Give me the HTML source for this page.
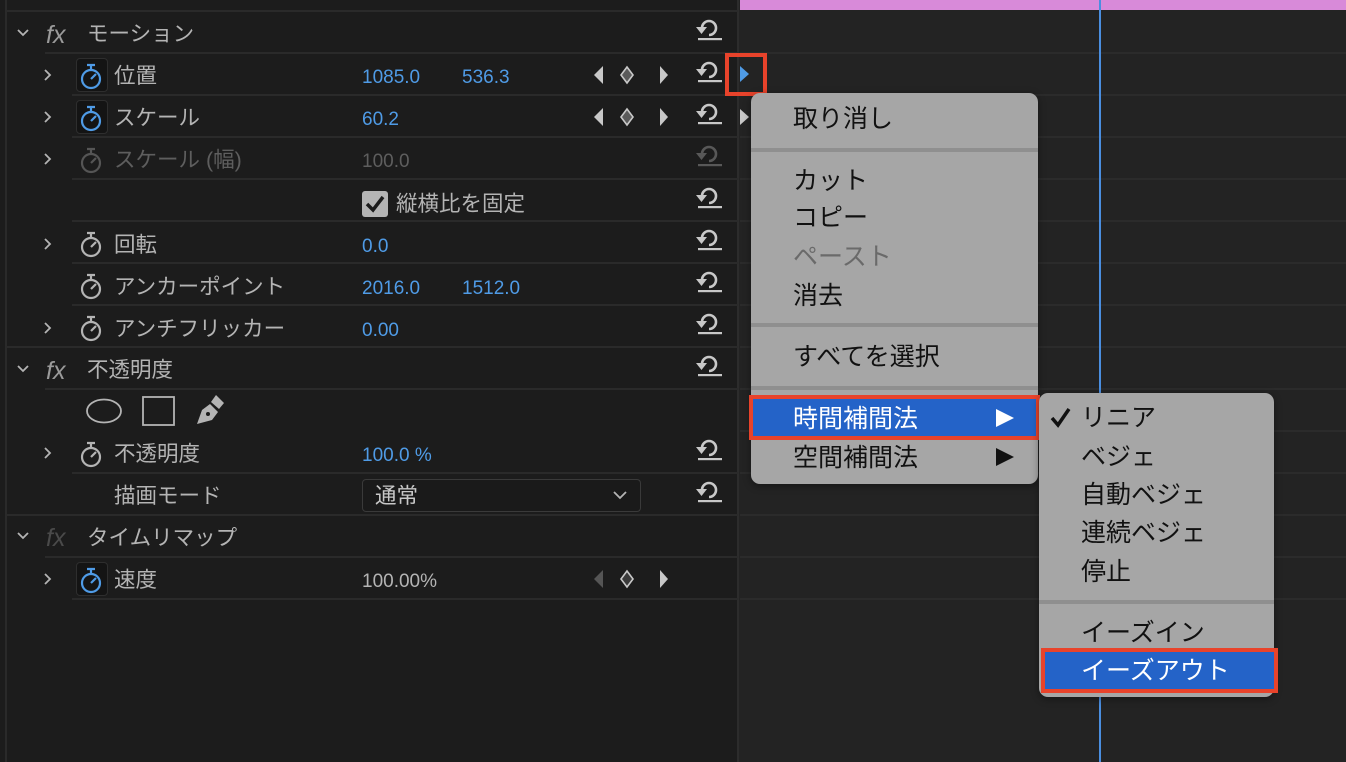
<!DOCTYPE html>
<html><head><meta charset="utf-8">
<style>
*{margin:0;padding:0;box-sizing:border-box}
body{width:1346px;height:762px;overflow:hidden;background:#1c1c1c;font-family:"Liberation Sans","Noto Sans CJK JP",sans-serif;position:relative}
.a{position:absolute}
.t{position:absolute;font-size:21.5px;color:#b4b4b4;line-height:1;white-space:nowrap;transform:translateY(2px)}
.v{position:absolute;font-size:19px;color:#4f9be6;line-height:1;white-space:nowrap;transform:translateY(2px)}
.ln{position:absolute;height:2px;background:#2a2a2a}
.rl{position:absolute;left:740px;width:606px;height:2px;background:#2b2b2b}
.mi{position:absolute;font-size:25px;color:#111;line-height:1;white-space:nowrap;transform:translateY(2px)}
.sep{position:absolute;height:4px;background:#8f8f8f}
svg{position:absolute;overflow:visible}
.fx{position:absolute;font-family:'Liberation Sans',sans-serif;font-style:italic;font-size:25px;color:#9a9a9a;line-height:1;transform:translateY(2px)}
</style></head><body>
<svg width="0" height="0" style="position:absolute">
<defs>
<g id="rst"><path d="M6 12 A7 7 0 1 1 13 19" fill="none" stroke="#c8c8c8" stroke-width="2.6"/><path d="M0 11 L11 11 L5.5 18 Z" fill="#c8c8c8"/><rect x="2" y="22" width="24" height="2.2" fill="#c8c8c8"/></g>
<g id="sw"><circle cx="0" cy="0" r="9" fill="none" stroke-width="2.2"/><path d="M0 -9 V-14 M-4 -14 H4 M0 0 L5 -5" fill="none" stroke-width="2.2"/></g>
<g id="kf"><path d="M0 -9 L-9 0 L0 9 Z" fill="#c8c8c8"/><path d="M24 -8 L30 0 L24 8 L18 0 Z" fill="#5a5a5a" stroke="#c8c8c8" stroke-width="1.6"/><path d="M57 -9 L65 0 L57 9 Z" fill="#c8c8c8"/></g>
<path id="chr" d="M0 0 L5 5 L0 10" fill="none" stroke="#b4b4b4" stroke-width="1.8"/>
<path id="chd" d="M0 0 L5 5 L10 0" fill="none" stroke="#b4b4b4" stroke-width="1.8"/>
</defs></svg>

<div class="a" style="left:738px;top:0;width:608px;height:762px;background:#232323"></div>
<div class="a" style="left:737px;top:0;width:2px;height:762px;background:#2c2c2c"></div>
<div class="a" style="left:740px;top:0;width:606px;height:10px;background:#d88ad9"></div>
<div class="rl" style="top:52px"></div><div class="rl" style="top:94px"></div><div class="rl" style="top:136px"></div>
<div class="rl" style="top:178px"></div><div class="rl" style="top:220px"></div><div class="rl" style="top:262px"></div>
<div class="rl" style="top:304px"></div><div class="rl" style="top:346px"></div><div class="rl" style="top:388px"></div>
<div class="rl" style="top:430px"></div><div class="rl" style="top:472px"></div><div class="rl" style="top:514px"></div>
<div class="rl" style="top:556px"></div><div class="rl" style="top:598px"></div>
<div class="a" style="left:1099px;top:0;width:2px;height:762px;background:#4a8ee0"></div>

<div class="a" style="left:5px;top:0;width:2px;height:762px;background:#2a2a2a"></div>
<div class="ln" style="left:5px;top:10px;width:733px"></div>
<div class="ln" style="left:45px;top:52px;width:693px"></div>
<div class="ln" style="left:72px;top:94px;width:666px"></div>
<div class="ln" style="left:72px;top:136px;width:666px"></div>
<div class="ln" style="left:72px;top:178px;width:666px"></div>
<div class="ln" style="left:72px;top:220px;width:666px"></div>
<div class="ln" style="left:72px;top:262px;width:666px"></div>
<div class="ln" style="left:72px;top:304px;width:666px"></div>
<div class="ln" style="left:5px;top:346px;width:733px"></div>
<div class="ln" style="left:45px;top:388px;width:693px"></div>
<div class="ln" style="left:72px;top:472px;width:666px"></div>
<div class="ln" style="left:5px;top:514px;width:733px"></div>
<div class="ln" style="left:45px;top:556px;width:693px"></div>
<div class="ln" style="left:72px;top:598px;width:666px"></div>

<svg style="left:18px;top:30px"><use href="#chd"/></svg>
<div class="fx" style="left:46px;top:21px">fx</div>
<div class="t" style="left:87px;top:22px">モーション</div>
<svg style="left:696px;top:16px"><use href="#rst"/></svg>

<svg style="left:45px;top:70px"><use href="#chr"/></svg>
<div class="a" style="left:76px;top:58px;width:32px;height:34px;background:#141414;border:1px solid #2e2e2e;border-radius:4px"></div>
<svg style="left:91px;top:79px" stroke="#4f9be6"><use href="#sw"/></svg>
<div class="t" style="left:114px;top:64px">位置</div>
<div class="v" style="left:362px;top:66px">1085.0</div>
<div class="v" style="left:462px;top:66px">536.3</div>
<svg style="left:603px;top:75px"><use href="#kf"/></svg>
<svg style="left:696px;top:58px"><use href="#rst"/></svg>
<svg style="left:740px;top:66px"><path d="M0 0 L9 8 L0 16 Z" fill="#4f9be6"/></svg>
<div class="a" style="left:725px;top:53px;width:42px;height:43px;border:4px solid #e8432b"></div>

<svg style="left:45px;top:112px"><use href="#chr"/></svg>
<div class="a" style="left:76px;top:100px;width:32px;height:34px;background:#141414;border:1px solid #2e2e2e;border-radius:4px"></div>
<svg style="left:91px;top:121px" stroke="#4f9be6"><use href="#sw"/></svg>
<div class="t" style="left:114px;top:106px">スケール</div>
<div class="v" style="left:362px;top:108px">60.2</div>
<svg style="left:603px;top:117px"><use href="#kf"/></svg>
<svg style="left:696px;top:100px"><use href="#rst"/></svg>
<svg style="left:740px;top:109px"><path d="M0 0 L9 8 L0 16 Z" fill="#c8c8c8"/></svg>

<svg style="left:45px;top:154px"><use href="#chr"/></svg>
<svg style="left:91px;top:163px" stroke="#555"><use href="#sw"/></svg>
<div class="t" style="left:114px;top:148px;color:#5e5e5e">スケール (幅)</div>
<div class="v" style="left:362px;top:150px;color:#5e5e5e">100.0</div>
<svg style="left:696px;top:142px;opacity:.35"><use href="#rst"/></svg>

<div class="a" style="left:362px;top:191px;width:26px;height:26px;background:#b4b4b4;border-radius:3px"></div>
<svg style="left:362px;top:191px"><path d="M5 13 L11 19 L21 6" fill="none" stroke="#1c1c1c" stroke-width="3.5"/></svg>
<div class="t" style="left:396px;top:192px">縦横比を固定</div>
<svg style="left:696px;top:184px"><use href="#rst"/></svg>

<svg style="left:45px;top:239px"><use href="#chr"/></svg>
<svg style="left:91px;top:247px" stroke="#b4b4b4"><use href="#sw"/></svg>
<div class="t" style="left:114px;top:233px">回転</div>
<div class="v" style="left:362px;top:235px">0.0</div>
<svg style="left:696px;top:226px"><use href="#rst"/></svg>

<svg style="left:91px;top:289px" stroke="#b4b4b4"><use href="#sw"/></svg>
<div class="t" style="left:114px;top:275px">アンカーポイント</div>
<div class="v" style="left:362px;top:277px">2016.0</div>
<div class="v" style="left:462px;top:277px">1512.0</div>
<svg style="left:696px;top:268px"><use href="#rst"/></svg>

<svg style="left:45px;top:323px"><use href="#chr"/></svg>
<svg style="left:91px;top:331px" stroke="#b4b4b4"><use href="#sw"/></svg>
<div class="t" style="left:114px;top:317px">アンチフリッカー</div>
<div class="v" style="left:362px;top:319px">0.00</div>
<svg style="left:696px;top:310px"><use href="#rst"/></svg>

<svg style="left:18px;top:366px"><use href="#chd"/></svg>
<div class="fx" style="left:46px;top:357px">fx</div>
<div class="t" style="left:87px;top:358px">不透明度</div>
<svg style="left:696px;top:352px"><use href="#rst"/></svg>

<svg style="left:86px;top:398px"><ellipse cx="18" cy="13" rx="17" ry="11.5" fill="none" stroke="#b4b4b4" stroke-width="1.8"/></svg>
<svg style="left:142px;top:396px"><rect x="1" y="1" width="31" height="28" fill="none" stroke="#b4b4b4" stroke-width="1.8"/></svg>
<svg style="left:194px;top:394px"><path d="M3 30 L8 16 L16 10 L24 18 L18 26 Z" fill="#b4b4b4"/><path d="M17 8 L22 1 L30 9 L25 15 Z" fill="#b4b4b4"/><circle cx="14" cy="20" r="2" fill="#1c1c1c"/></svg>

<svg style="left:45px;top:448px"><use href="#chr"/></svg>
<svg style="left:91px;top:457px" stroke="#b4b4b4"><use href="#sw"/></svg>
<div class="t" style="left:114px;top:442px">不透明度</div>
<div class="v" style="left:362px;top:444px">100.0 %</div>
<svg style="left:696px;top:436px"><use href="#rst"/></svg>

<div class="t" style="left:114px;top:484px">描画モード</div>
<div class="a" style="left:362px;top:479px;width:279px;height:33px;background:#1a1a1a;border:1.5px solid #3a3a3a;border-radius:4px"></div>
<div class="t" style="left:375px;top:484px;color:#c8c8c8">通常</div>
<svg style="left:614px;top:492px"><path d="M0 0 L6 6 L12 0" fill="none" stroke="#b4b4b4" stroke-width="1.8"/></svg>
<svg style="left:696px;top:478px"><use href="#rst"/></svg>

<svg style="left:18px;top:533px"><use href="#chd"/></svg>
<div class="fx" style="left:46px;top:524px;color:#4a4a4a">fx</div>
<div class="t" style="left:87px;top:526px">タイムリマップ</div>

<svg style="left:45px;top:574px"><use href="#chr"/></svg>
<div class="a" style="left:76px;top:562px;width:32px;height:34px;background:#141414;border:1px solid #2e2e2e;border-radius:4px"></div>
<svg style="left:91px;top:583px" stroke="#4f9be6"><use href="#sw"/></svg>
<div class="t" style="left:114px;top:568px">速度</div>
<div class="v" style="left:362px;top:570px;color:#b4b4b4">100.00%</div>
<svg style="left:603px;top:579px"><path d="M0 -9 L-9 0 L0 9 Z" fill="#555"/><path d="M24 -8 L30 0 L24 8 L18 0 Z" fill="#3a3a3a" stroke="#c8c8c8" stroke-width="1.6"/><path d="M57 -9 L65 0 L57 9 Z" fill="#c8c8c8"/></svg>

<div class="a" style="left:751px;top:93px;width:287px;height:391px;background:#a6a6a6;border-radius:9px;box-shadow:0 2px 8px rgba(0,0,0,.4)"></div>
<div class="mi" style="left:793px;top:105px">取り消し</div>
<div class="sep" style="left:751px;top:148px;width:287px"></div>
<div class="mi" style="left:793px;top:167px">カット</div>
<div class="mi" style="left:793px;top:204px">コピー</div>
<div class="mi" style="left:793px;top:243px;color:#6a6a6a">ペースト</div>
<div class="mi" style="left:793px;top:282px">消去</div>
<div class="sep" style="left:751px;top:323px;width:287px"></div>
<div class="mi" style="left:793px;top:343px">すべてを選択</div>
<div class="sep" style="left:751px;top:386px;width:287px"></div>
<div class="a" style="left:751px;top:396px;width:287px;height:42px;background:#2463c8"></div>
<div class="a" style="left:749px;top:395px;width:291px;height:45px;border:4px solid #e8432b"></div>
<div class="mi" style="left:793px;top:405px;color:#fff">時間補間法</div>
<svg style="left:996px;top:409px"><path d="M0 0 L18 9 L0 18 Z" fill="#fff"/></svg>
<div class="mi" style="left:793px;top:444px">空間補間法</div>
<svg style="left:996px;top:448px"><path d="M0 0 L18 9 L0 18 Z" fill="#111"/></svg>

<div class="a" style="left:1039px;top:393px;width:235px;height:304px;background:#a6a6a6;border-radius:9px;box-shadow:0 2px 8px rgba(0,0,0,.4)"></div>
<svg style="left:1050px;top:407px"><path d="M2 11 L8 18 L19 2" fill="none" stroke="#111" stroke-width="3.5"/></svg>
<div class="mi" style="left:1081px;top:404px">リニア</div>
<div class="mi" style="left:1081px;top:443px">ベジェ</div>
<div class="mi" style="left:1081px;top:481px">自動ベジェ</div>
<div class="mi" style="left:1081px;top:519px">連続ベジェ</div>
<div class="mi" style="left:1081px;top:558px">停止</div>
<div class="sep" style="left:1039px;top:600px;width:235px"></div>
<div class="mi" style="left:1081px;top:619px">イーズイン</div>
<div class="a" style="left:1041px;top:650px;width:236px;height:42px;background:#2463c8"></div>
<div class="a" style="left:1041px;top:648px;width:237px;height:45px;border:4px solid #e8432b"></div>
<div class="mi" style="left:1081px;top:657px;color:#fff">イーズアウト</div>
</body></html>
